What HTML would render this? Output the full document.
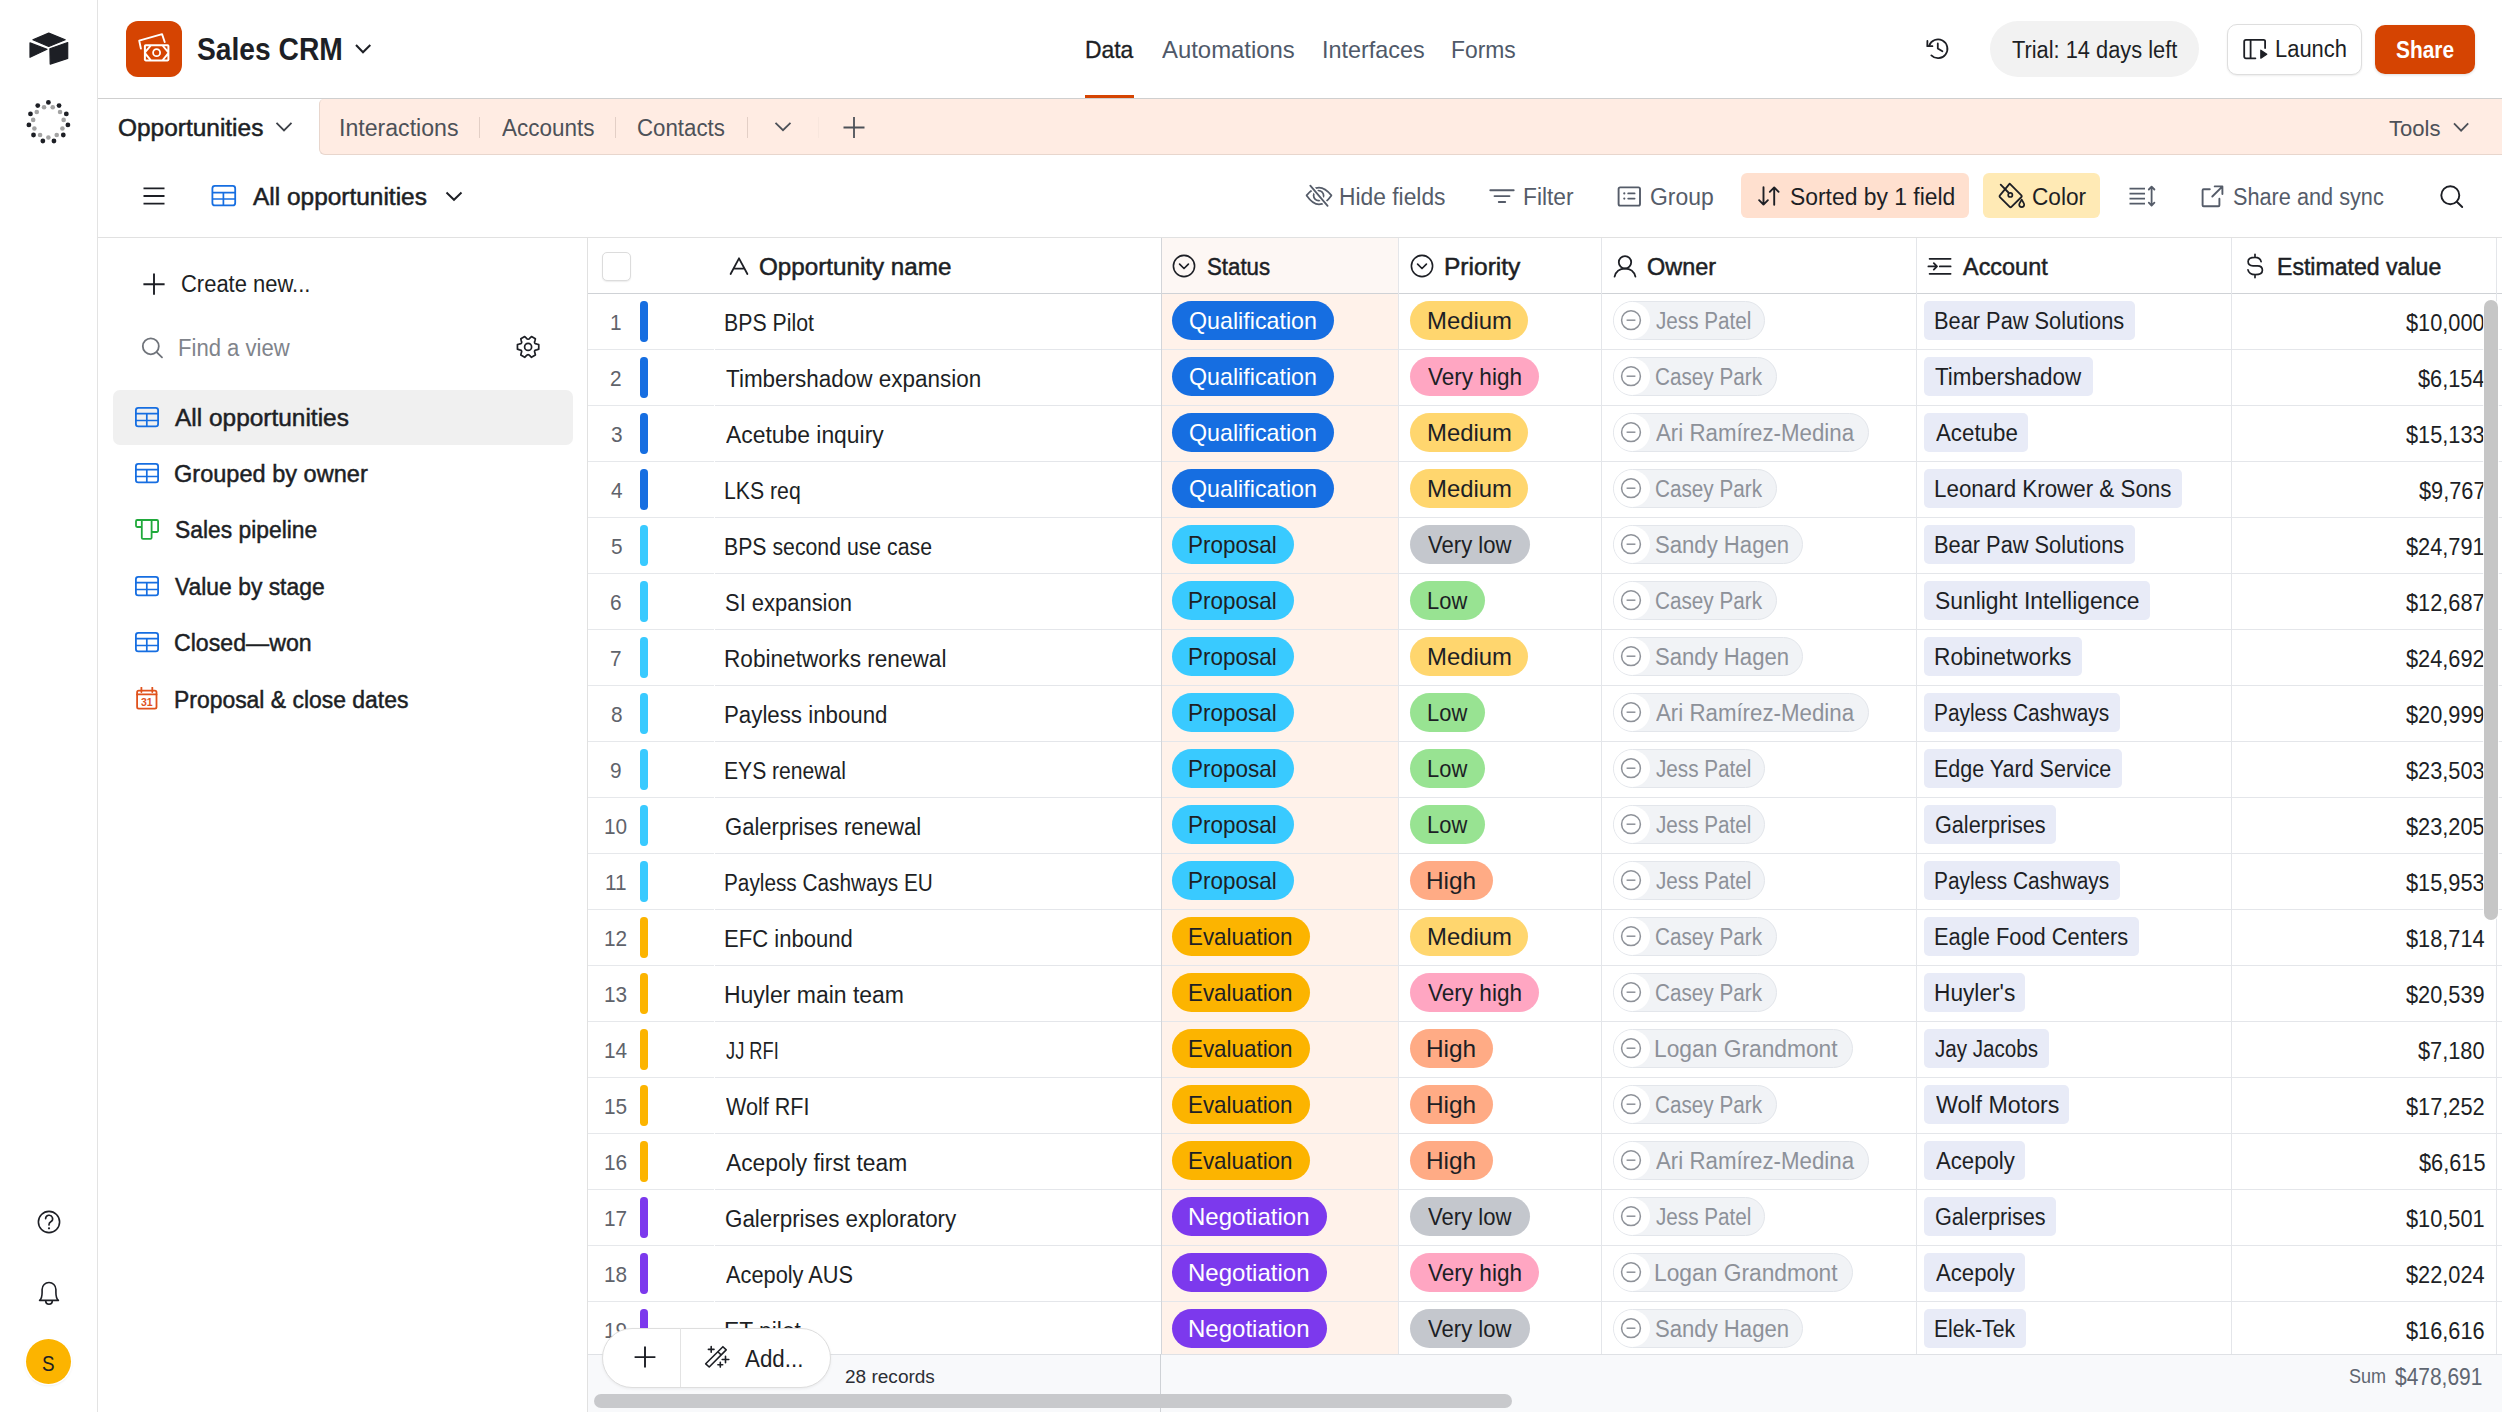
<!DOCTYPE html><html><head><meta charset="utf-8"><style>
html,body{margin:0;padding:0;}
body{width:2502px;height:1412px;position:relative;overflow:hidden;background:#fff;font-family:"Liberation Sans", sans-serif;}
.a{position:absolute;}
.t{position:absolute;white-space:nowrap;transform-origin:0 0;}
</style></head><body>
<div class="a" style="left:97px;top:0px;width:1px;height:1412px;background:#e3e3e3;"></div>
<svg class="a" style="left:0px;top:0px;" width="97" height="160" viewBox="0 0 97 160" fill="none">
<path d="M32.9 39.7 L48.75 33.1 L65.2 39.7 L48.75 46.5 Z" fill="#1d1f25" stroke="#1d1f25" stroke-width="1.2" stroke-linejoin="round"/>
<path d="M30 42.9 L47 49.3 L30 57.3 Z" fill="#1d1f25" stroke="#1d1f25" stroke-width="1.2" stroke-linejoin="round"/>
<path d="M49.9 48.8 L67.7 42.5 L67.7 58.4 L50.2 64.1 Z" fill="#1d1f25" stroke="#1d1f25" stroke-width="1.2" stroke-linejoin="round"/>
</svg>
<svg class="a" style="left:0px;top:0px;" width="97" height="160" viewBox="0 0 97 160" fill="none"><circle cx="48.40" cy="102.40" r="2.4" fill="#1d1f25"/><circle cx="52.74" cy="107.32" r="2.3" fill="#a3a3a3"/><circle cx="59.05" cy="105.53" r="2.4" fill="#1d1f25"/><circle cx="60.04" cy="112.02" r="2.3" fill="#a3a3a3"/><circle cx="66.32" cy="113.92" r="2.4" fill="#1d1f25"/><circle cx="63.64" cy="119.91" r="2.3" fill="#a3a3a3"/><circle cx="67.90" cy="124.90" r="2.4" fill="#1d1f25"/><circle cx="62.41" cy="128.50" r="2.3" fill="#a3a3a3"/><circle cx="63.29" cy="135.00" r="2.4" fill="#1d1f25"/><circle cx="56.73" cy="135.06" r="2.3" fill="#a3a3a3"/><circle cx="53.95" cy="141.00" r="2.4" fill="#1d1f25"/><circle cx="48.40" cy="137.50" r="2.3" fill="#a3a3a3"/><circle cx="42.85" cy="141.00" r="2.4" fill="#1d1f25"/><circle cx="40.07" cy="135.06" r="2.3" fill="#a3a3a3"/><circle cx="33.51" cy="135.00" r="2.4" fill="#1d1f25"/><circle cx="34.39" cy="128.50" r="2.3" fill="#a3a3a3"/><circle cx="28.90" cy="124.90" r="2.4" fill="#1d1f25"/><circle cx="33.16" cy="119.91" r="2.3" fill="#a3a3a3"/><circle cx="30.48" cy="113.92" r="2.4" fill="#1d1f25"/><circle cx="36.76" cy="112.02" r="2.3" fill="#a3a3a3"/><circle cx="37.75" cy="105.53" r="2.4" fill="#1d1f25"/><circle cx="44.06" cy="107.32" r="2.3" fill="#a3a3a3"/></svg>
<svg class="a" style="left:0px;top:1190px;" width="97" height="130" viewBox="0 0 97 130" fill="none">
<circle cx="49" cy="32" r="10.6" stroke="#1d1f25" stroke-width="1.6"/>
<path d="M45.6 28.8 a3.5 3.5 0 1 1 5.2 3 c-1.2 .7 -1.8 1.3 -1.8 2.7 v.6" stroke="#1d1f25" stroke-width="1.6" stroke-linecap="round"/>
<circle cx="49" cy="38.3" r="1.1" fill="#1d1f25"/>
<path d="M39.6 110.4 c2 -1.8 2.5 -3.5 2.5 -8 v-3 a6.9 6.9 0 0 1 13.8 0 v3 c0 4.5 .5 6.2 2.5 8 z" stroke="#1d1f25" stroke-width="1.6" stroke-linejoin="round"/>
<path d="M45.7 110.9 a3.3 3.3 0 0 0 6.6 0" stroke="#1d1f25" stroke-width="1.6"/>
</svg>
<div class="a" style="left:26px;top:1338.5px;width:45px;height:45px;border-radius:50%;background:#fcb400;box-shadow:0 0 0 1.5px #fff,0 1px 3px rgba(0,0,0,.18);"></div>
<div class="t" style="left:42.41px;top:1353.50px;font-size:21.45px;line-height:21.45px;font-weight:400;color:#1d1f25;transform:scaleX(0.8800);">S</div>
<div class="a" style="left:98px;top:98px;width:2404px;height:1px;background:#cfcfcf;"></div>
<div class="a" style="left:126px;top:21px;width:56px;height:56px;border-radius:12px;background:#d54402;"></div>
<svg class="a" style="left:126px;top:21px;" width="56" height="56" viewBox="0 0 56 56" fill="none">
<path d="M14.9 27.6 L13.2 19.6 L36.1 13.2 L38.7 21" stroke="#fff" stroke-width="1.9" stroke-linejoin="round" stroke-linecap="round"/>
<rect x="17.9" y="23.2" width="25.5" height="17.2" rx="1.8" fill="#fff"/>
<path d="M19.9 31.8 L25.4 25.2 H36 L41.4 31.8 L36 38.4 H25.4 Z" fill="#d54402"/>
<path d="M19.9 25.2 L23 25.2 L19.9 28.7 Z M41.4 25.2 L38.3 25.2 L41.4 28.7 Z M19.9 38.4 L23 38.4 L19.9 34.9 Z M41.4 38.4 L38.3 38.4 L41.4 34.9 Z" fill="#d54402"/>
<circle cx="30.6" cy="31.7" r="3.5" stroke="#fff" stroke-width="1.8"/>
</svg>
<div class="t" style="left:196.56px;top:33.91px;font-size:31.30px;line-height:31.30px;font-weight:700;color:#1d1f25;transform:scaleX(0.9018);">Sales CRM</div>
<svg class="a" style="left:350px;top:38px;" width="26" height="22" viewBox="0 0 26 22" fill="none"><path d="M6 7 L13 14.3 L20.3 7" stroke="#1d1f25" stroke-width="2"/></svg>
<div class="t" style="left:1084.71px;top:38.90px;font-size:23.19px;line-height:23.19px;font-weight:400;color:#1d1f25;transform:scaleX(0.9870);-webkit-text-stroke:0.35px #1d1f25;">Data</div>
<div class="t" style="left:1162.00px;top:38.90px;font-size:23.19px;line-height:23.19px;font-weight:400;color:#4f5969;transform:scaleX(1.0299);">Automations</div>
<div class="t" style="left:1321.57px;top:38.90px;font-size:23.19px;line-height:23.19px;font-weight:400;color:#4f5969;transform:scaleX(1.0092);">Interfaces</div>
<div class="t" style="left:1451.11px;top:38.90px;font-size:23.19px;line-height:23.19px;font-weight:400;color:#4f5969;transform:scaleX(0.9864);">Forms</div>
<div class="a" style="left:1085px;top:95px;width:49px;height:3px;background:#d54402;"></div>
<svg class="a" style="left:1915px;top:25px;" width="50" height="50" viewBox="0 0 50 50" fill="none">
<path d="M16.35 30.45 A9.4 9.4 0 1 0 14.17 20.6" stroke="#1d1f25" stroke-width="1.8" stroke-linecap="round"/>
<path d="M12.4 15.9 L12.3 21.2 L17.4 21.2" stroke="#1d1f25" stroke-width="1.8" stroke-linecap="round" stroke-linejoin="round"/>
<path d="M22.8 18.4 V23.4 L27.4 26.2" stroke="#1d1f25" stroke-width="1.8" stroke-linecap="round" stroke-linejoin="round"/>
</svg>
<div class="a" style="left:1990px;top:21px;width:209px;height:56px;border-radius:28px;background:#f2f2f2;"></div>
<div class="t" style="left:2011.86px;top:39.10px;font-size:23.62px;line-height:23.62px;font-weight:400;color:#1d1f25;transform:scaleX(0.9239);">Trial: 14 days left</div>
<div class="a" style="left:2226.5px;top:24px;width:135px;height:50.5px;box-sizing:border-box;border-radius:10px;border:1px solid #dedede;background:#fff;box-shadow:0 1px 2px rgba(0,0,0,.08);"></div>
<svg class="a" style="left:2235px;top:30px;" width="40" height="40" viewBox="0 0 40 40" fill="none">
<path d="M20.4 28.3 H11 a1.8 1.8 0 0 1 -1.8 -1.8 V11.6 a1.8 1.8 0 0 1 1.8 -1.8 H28.6 a1.5 1.5 0 0 1 1.5 1.5 V18" stroke="#1d1f25" stroke-width="1.8" stroke-linecap="round"/>
<path d="M15.6 10 V28" stroke="#1d1f25" stroke-width="1.8"/>
<path d="M25.8 20.2 L31.8 24.2 L25.8 28.2 Z" fill="#1d1f25" stroke="#1d1f25" stroke-width="1.2" stroke-linejoin="round"/>
</svg>
<div class="t" style="left:2275.29px;top:38.10px;font-size:23.62px;line-height:23.62px;font-weight:400;color:#1d1f25;transform:scaleX(0.9283);">Launch</div>
<div class="a" style="left:2375px;top:25px;width:100px;height:49px;border-radius:10px;background:#d54402;box-shadow:0 1px 3px rgba(0,0,0,.14);"></div>
<div class="t" style="left:2396.47px;top:38.91px;font-size:23.48px;line-height:23.48px;font-weight:700;color:#fff;transform:scaleX(0.8896);">Share</div>
<div class="a" style="left:319px;top:99px;width:2200px;height:56px;box-sizing:border-box;background:#ffece3;border-left:1px solid #e8d6cd;border-bottom:1px solid #e8d6cd;border-radius:5px 0 0 6px;"></div>
<div class="t" style="left:118.35px;top:117.21px;font-size:23.48px;line-height:23.48px;font-weight:400;color:#1d1f25;transform:scaleX(1.0413);-webkit-text-stroke:0.5px #1d1f25;">Opportunities</div>
<svg class="a" style="left:270px;top:115px;" width="28" height="22" viewBox="0 0 28 22" fill="none"><path d="M6.5 7.8 L14 15.5 L21.5 7.8" stroke="#3d4148" stroke-width="1.8"/></svg>
<div class="t" style="left:338.69px;top:116.21px;font-size:23.91px;line-height:23.91px;font-weight:400;color:#4d5158;transform:scaleX(0.9669);">Interactions</div>
<div class="a" style="left:479px;top:117px;width:1px;height:21px;background:#e3cfc6;"></div>
<div class="t" style="left:501.70px;top:116.21px;font-size:23.91px;line-height:23.91px;font-weight:400;color:#4d5158;transform:scaleX(0.9404);">Accounts</div>
<div class="a" style="left:615px;top:117px;width:1px;height:21px;background:#e3cfc6;"></div>
<div class="t" style="left:636.76px;top:116.21px;font-size:23.91px;line-height:23.91px;font-weight:400;color:#4d5158;transform:scaleX(0.9319);">Contacts</div>
<div class="a" style="left:746.5px;top:117px;width:1px;height:21px;background:#e3cfc6;"></div>
<svg class="a" style="left:770px;top:115px;" width="28" height="22" viewBox="0 0 28 22" fill="none"><path d="M5.5 7.8 L13 15.2 L20.5 7.8" stroke="#4d5158" stroke-width="1.8"/></svg>
<div class="a" style="left:817.5px;top:117px;width:1px;height:21px;background:#f8e6dd;"></div>
<svg class="a" style="left:838px;top:112px;" width="32" height="32" viewBox="0 0 32 32" fill="none"><path d="M16 5 V26 M5.5 15.5 H26.5" stroke="#4d5158" stroke-width="1.8"/></svg>
<div class="t" style="left:2388.66px;top:116.61px;font-size:22.90px;line-height:22.90px;font-weight:400;color:#4d5158;transform:scaleX(0.9641);">Tools</div>
<svg class="a" style="left:2448px;top:113px;" width="28" height="26" viewBox="0 0 28 26" fill="none"><path d="M6 10.3 L13.1 17.6 L20.2 10.3" stroke="#4d5158" stroke-width="1.8"/></svg>
<div class="a" style="left:98px;top:237px;width:2404px;height:1px;background:#e1e1e1;"></div>
<svg class="a" style="left:135px;top:175px;" width="40" height="40" viewBox="0 0 40 40" fill="none"><path d="M8.5 13.4 H29.5 M8.5 21 H29.5 M8.5 28.6 H29.5" stroke="#1d1f25" stroke-width="1.8"/></svg>
<svg class="a" style="left:205px;top:178px;" width="40" height="36" viewBox="0 0 40 36" fill="none">
<rect x="7.4" y="7.9" width="22.8" height="19.5" rx="2.5" stroke="#166ee1" stroke-width="1.8"/>
<path d="M7.4 14.6 H30.2 M7.4 21 H30.2 M18.4 14.6 V27.4" stroke="#166ee1" stroke-width="1.7"/>
</svg>
<div class="t" style="left:252.50px;top:186.01px;font-size:23.62px;line-height:23.62px;font-weight:400;color:#1d1f25;transform:scaleX(1.0350);-webkit-text-stroke:0.5px #1d1f25;">All opportunities</div>
<svg class="a" style="left:440px;top:185px;" width="28" height="22" viewBox="0 0 28 22" fill="none"><path d="M6.5 7.5 L14 14.8 L21.5 7.5" stroke="#1d1f25" stroke-width="1.9"/></svg>
<svg class="a" style="left:1295px;top:175px;" width="50" height="40" viewBox="0 0 50 40" fill="none"><path d="M11.6 20.4 Q24 4.6 36.4 20.4 Q24 38.2 11.6 20.4 Z" stroke="#555c69" stroke-width="1.75" stroke-linejoin="round"/>
<circle cx="23.6" cy="20.6" r="5" stroke="#555c69" stroke-width="1.75"/>
<path d="M15.3 10.6 L32.6 30.8" stroke="#fff" stroke-width="4.6"/>
<path d="M15.3 10.6 L32.6 30.8" stroke="#555c69" stroke-width="1.8" stroke-linecap="round"/></svg>
<div class="t" style="left:1339.22px;top:185.02px;font-size:23.91px;line-height:23.91px;font-weight:400;color:#555c69;transform:scaleX(0.9538);">Hide fields</div>
<svg class="a" style="left:1485px;top:180px;" width="34" height="32" viewBox="0 0 34 32" fill="none"><path d="M5.3 10.3 H28.7 M9.5 16.1 H24.5 M13.8 22 H20.2" stroke="#555c69" stroke-width="1.9" stroke-linecap="round"/></svg>
<div class="t" style="left:1522.52px;top:185.02px;font-size:23.91px;line-height:23.91px;font-weight:400;color:#555c69;transform:scaleX(0.9520);">Filter</div>
<svg class="a" style="left:1612px;top:180px;" width="34" height="32" viewBox="0 0 34 32" fill="none">
<rect x="6.6" y="7.4" width="21.4" height="18.2" rx="1.6" stroke="#555c69" stroke-width="1.9"/>
<circle cx="12.3" cy="13.4" r="1.1" fill="#555c69"/><circle cx="12.3" cy="18.6" r="1.1" fill="#555c69"/>
<path d="M16.2 13.4 H22.6 M16.2 18.6 H22.6" stroke="#555c69" stroke-width="1.8" stroke-linecap="round"/>
</svg>
<div class="t" style="left:1649.73px;top:185.02px;font-size:23.91px;line-height:23.91px;font-weight:400;color:#555c69;transform:scaleX(0.9585);">Group</div>
<div class="a" style="left:1741px;top:173px;width:227.5px;height:45px;border-radius:6px;background:#ffe0cf;"></div>
<svg class="a" style="left:1752px;top:180px;" width="34" height="34" viewBox="0 0 34 34" fill="none">
<path d="M11.5 7.2 V24.6 M7.1 20.2 L11.5 24.6 L15.9 20.2" stroke="#1d1f25" stroke-width="1.9" stroke-linecap="round" stroke-linejoin="round"/>
<path d="M22.2 24.8 V7.4 M17.8 11.8 L22.2 7.4 L26.6 11.8" stroke="#1d1f25" stroke-width="1.9" stroke-linecap="round" stroke-linejoin="round"/>
</svg>
<div class="t" style="left:1790.28px;top:185.02px;font-size:23.91px;line-height:23.91px;font-weight:400;color:#1d1f25;transform:scaleX(0.9571);">Sorted by 1 field</div>
<div class="a" style="left:1983px;top:173px;width:117px;height:45px;border-radius:6px;background:#ffeab5;"></div>
<svg class="a" style="left:1990px;top:175px;" width="40" height="40" viewBox="0 0 40 40" fill="none">
<path d="M19.7 8.6 L31.4 20.3 a1.2 1.2 0 0 1 0 1.7 L21.4 31.9 a1.2 1.2 0 0 1 -1.7 0 L9.9 22.1 a1.2 1.2 0 0 1 0 -1.7 Z" stroke="#1d1f25" stroke-width="1.8" stroke-linejoin="round"/>
<path d="M10.7 9.6 L18.4 17.5" stroke="#1d1f25" stroke-width="1.8" stroke-linecap="round"/>
<circle cx="20.3" cy="19.9" r="2.1" stroke="#1d1f25" stroke-width="1.7"/>
<path d="M31.7 24.5 C31.2 26.2 29.2 28 29.2 29.6 a2.5 2.5 0 0 0 5 0 C34.2 28 32.2 26.2 31.7 24.5 Z" stroke="#1d1f25" stroke-width="1.7" stroke-linejoin="round"/>
</svg>
<div class="t" style="left:2031.94px;top:185.02px;font-size:23.91px;line-height:23.91px;font-weight:400;color:#1d1f25;transform:scaleX(0.9480);">Color</div>
<svg class="a" style="left:2122px;top:178px;" width="40" height="36" viewBox="0 0 40 36" fill="none">
<path d="M7.5 10.6 H23 M7.5 15.6 H23 M7.5 20.6 H23 M7.5 25.6 H23" stroke="#555c69" stroke-width="1.9"/>
<path d="M29.6 8.8 V27.4 M26.8 11.5 L29.6 8.6 L32.4 11.5 M26.8 24.7 L29.6 27.6 L32.4 24.7" stroke="#555c69" stroke-width="1.8" stroke-linecap="round" stroke-linejoin="round"/>
</svg>
<svg class="a" style="left:2195px;top:178px;" width="36" height="36" viewBox="0 0 36 36" fill="none">
<path d="M14.8 11.3 H8.6 a1 1 0 0 0 -1 1 V27.2 a1 1 0 0 0 1 1 H23.4 a1 1 0 0 0 1 -1 V20.8" stroke="#555c69" stroke-width="1.9" stroke-linecap="round"/>
<path d="M19.7 8.4 H27.4 V16.1 M27.2 8.6 L17.3 18.5" stroke="#555c69" stroke-width="1.9" stroke-linecap="round" stroke-linejoin="round"/>
</svg>
<div class="t" style="left:2233.32px;top:185.02px;font-size:23.91px;line-height:23.91px;font-weight:400;color:#555c69;transform:scaleX(0.9076);">Share and sync</div>
<svg class="a" style="left:2432px;top:178px;" width="40" height="36" viewBox="0 0 40 36" fill="none"><circle cx="18.3" cy="17.2" r="9" stroke="#1d1f25" stroke-width="1.9"/><path d="M24.8 23.7 L30.2 29" stroke="#1d1f25" stroke-width="1.9" stroke-linecap="round"/></svg>
<div class="a" style="left:587px;top:238px;width:1px;height:1174px;background:#e1e1e1;"></div>
<svg class="a" style="left:138px;top:268px;" width="32" height="32" viewBox="0 0 32 32" fill="none"><path d="M16 5.6 V26.8 M5.4 16.2 H26.6" stroke="#1d1f25" stroke-width="1.9"/></svg>
<div class="t" style="left:181.47px;top:272.01px;font-size:24.35px;line-height:24.35px;font-weight:400;color:#1d1f25;transform:scaleX(0.9021);">Create new...</div>
<svg class="a" style="left:136px;top:331px;" width="32" height="32" viewBox="0 0 32 32" fill="none"><circle cx="14.8" cy="15.3" r="8" stroke="#6f737a" stroke-width="1.8"/><path d="M20.6 21.1 L26 26.3" stroke="#6f737a" stroke-width="1.8" stroke-linecap="round"/></svg>
<div class="t" style="left:177.97px;top:336.01px;font-size:24.35px;line-height:24.35px;font-weight:400;color:#80848b;transform:scaleX(0.9075);">Find a view</div>
<svg class="a" style="left:510px;top:330px;" width="36" height="34" viewBox="0 0 36 34" fill="none"><path d="M28.76 14.63 L28.76 19.17 L26.61 19.83 C24.82 19.75 23.93 21.29 24.89 22.80 L25.39 25.00 L21.47 27.27 L19.82 25.73 C18.99 24.15 17.21 24.15 16.38 25.73 L14.73 27.27 L10.81 25.00 L11.31 22.80 C12.27 21.29 11.38 19.75 9.59 19.83 L7.44 19.17 L7.44 14.63 L9.59 13.97 C11.38 14.05 12.27 12.51 11.31 11.00 L10.81 8.80 L14.73 6.53 L16.38 8.07 C17.21 9.65 18.99 9.65 19.82 8.07 L21.47 6.53 L25.39 8.80 L24.89 11.00 C23.93 12.51 24.82 14.05 26.61 13.97 Z" stroke="#1d1f25" stroke-width="1.7" stroke-linejoin="round"/><circle cx="18.1" cy="16.9" r="3.5" stroke="#1d1f25" stroke-width="1.7"/></svg>
<div class="a" style="left:112.5px;top:389.5px;width:460px;height:55.5px;border-radius:7px;background:#f0f0f0;"></div>
<svg class="a" style="left:133px;top:404.8px;" width="30" height="26" viewBox="0 0 30 26" fill="none"><rect x="2.9" y="2.8" width="22.2" height="18.5" rx="2.4" stroke="#166ee1" stroke-width="1.8"/>
<path d="M2.9 8.6 H25.1 M2.9 15.5 H25.1 M13.8 8.6 V21.3" stroke="#166ee1" stroke-width="1.7"/></svg>
<div class="t" style="left:175.40px;top:405.80px;font-size:24.64px;line-height:24.64px;font-weight:400;color:#1d1f25;transform:scaleX(0.9924);-webkit-text-stroke:0.5px #1d1f25;">All opportunities</div>
<svg class="a" style="left:133px;top:461.2px;" width="30" height="26" viewBox="0 0 30 26" fill="none"><rect x="2.9" y="2.8" width="22.2" height="18.5" rx="2.4" stroke="#166ee1" stroke-width="1.8"/>
<path d="M2.9 8.6 H25.1 M2.9 15.5 H25.1 M13.8 8.6 V21.3" stroke="#166ee1" stroke-width="1.7"/></svg>
<div class="t" style="left:174.30px;top:462.21px;font-size:24.64px;line-height:24.64px;font-weight:400;color:#1d1f25;transform:scaleX(0.9562);-webkit-text-stroke:0.5px #1d1f25;">Grouped by owner</div>
<svg class="a" style="left:133px;top:517.4px;" width="30" height="26" viewBox="0 0 30 26" fill="none"><path d="M4.2 3 H23.9 a1.2 1.2 0 0 1 1.2 1.2 V13.8 a1.2 1.2 0 0 1 -1.2 1.2 H18.6 M4.2 3 a1.2 1.2 0 0 0 -1.2 1.2 V8.8 a1.2 1.2 0 0 0 1.2 1.2 H8.8 M8.8 3 V20.7 a1.2 1.2 0 0 0 1.2 1.2 H17.4 a1.2 1.2 0 0 0 1.2 -1.2 V3" stroke="#20a93b" stroke-width="1.8" stroke-linejoin="round"/></svg>
<div class="t" style="left:174.69px;top:518.40px;font-size:24.64px;line-height:24.64px;font-weight:400;color:#1d1f25;transform:scaleX(0.9272);-webkit-text-stroke:0.5px #1d1f25;">Sales pipeline</div>
<svg class="a" style="left:133px;top:573.6px;" width="30" height="26" viewBox="0 0 30 26" fill="none"><rect x="2.9" y="2.8" width="22.2" height="18.5" rx="2.4" stroke="#166ee1" stroke-width="1.8"/>
<path d="M2.9 8.6 H25.1 M2.9 15.5 H25.1 M13.8 8.6 V21.3" stroke="#166ee1" stroke-width="1.7"/></svg>
<div class="t" style="left:175.40px;top:574.60px;font-size:24.64px;line-height:24.64px;font-weight:400;color:#1d1f25;transform:scaleX(0.9290);-webkit-text-stroke:0.5px #1d1f25;">Value by stage</div>
<svg class="a" style="left:133px;top:629.8px;" width="30" height="26" viewBox="0 0 30 26" fill="none"><rect x="2.9" y="2.8" width="22.2" height="18.5" rx="2.4" stroke="#166ee1" stroke-width="1.8"/>
<path d="M2.9 8.6 H25.1 M2.9 15.5 H25.1 M13.8 8.6 V21.3" stroke="#166ee1" stroke-width="1.7"/></svg>
<div class="t" style="left:174.31px;top:630.80px;font-size:24.64px;line-height:24.64px;font-weight:400;color:#1d1f25;transform:scaleX(0.9397);-webkit-text-stroke:0.5px #1d1f25;">Closed—won</div>
<svg class="a" style="left:133px;top:686.5px;" width="30" height="28" viewBox="0 0 30 28" fill="none"><rect x="4.1" y="3.7" width="19.4" height="17.9" rx="1.6" stroke="#e0521c" stroke-width="1.8"/>
<path d="M4.1 7.4 H23.5 M8.4 0.6 V5 M19.3 0.6 V5" stroke="#e0521c" stroke-width="1.8" stroke-linecap="round"/>
<text x="13.8" y="19.2" font-family="Liberation Sans" font-weight="700" font-size="10.5" fill="#e0521c" text-anchor="middle">31</text></svg>
<div class="t" style="left:173.61px;top:687.51px;font-size:24.64px;line-height:24.64px;font-weight:400;color:#1d1f25;transform:scaleX(0.9306);-webkit-text-stroke:0.5px #1d1f25;">Proposal &amp; close dates</div>
<div class="a" style="left:1162px;top:238px;width:236px;height:55px;background:#fdf7f4;"></div>
<div class="a" style="left:1162px;top:294px;width:236px;height:1060px;background:#fff2ea;"></div>
<div class="a" style="left:588px;top:293px;width:1914px;height:1px;background:#cfd2d6;"></div>
<div class="a" style="left:588px;top:349px;width:126px;height:1px;background:#e6e8eb;"></div>
<div class="a" style="left:715px;top:349px;width:1787px;height:1px;background:#e4e6ea;"></div>
<div class="a" style="left:588px;top:405px;width:126px;height:1px;background:#e6e8eb;"></div>
<div class="a" style="left:715px;top:405px;width:1787px;height:1px;background:#e4e6ea;"></div>
<div class="a" style="left:588px;top:461px;width:126px;height:1px;background:#e6e8eb;"></div>
<div class="a" style="left:715px;top:461px;width:1787px;height:1px;background:#e4e6ea;"></div>
<div class="a" style="left:588px;top:517px;width:126px;height:1px;background:#e6e8eb;"></div>
<div class="a" style="left:715px;top:517px;width:1787px;height:1px;background:#e4e6ea;"></div>
<div class="a" style="left:588px;top:573px;width:126px;height:1px;background:#e6e8eb;"></div>
<div class="a" style="left:715px;top:573px;width:1787px;height:1px;background:#e4e6ea;"></div>
<div class="a" style="left:588px;top:629px;width:126px;height:1px;background:#e6e8eb;"></div>
<div class="a" style="left:715px;top:629px;width:1787px;height:1px;background:#e4e6ea;"></div>
<div class="a" style="left:588px;top:685px;width:126px;height:1px;background:#e6e8eb;"></div>
<div class="a" style="left:715px;top:685px;width:1787px;height:1px;background:#e4e6ea;"></div>
<div class="a" style="left:588px;top:741px;width:126px;height:1px;background:#e6e8eb;"></div>
<div class="a" style="left:715px;top:741px;width:1787px;height:1px;background:#e4e6ea;"></div>
<div class="a" style="left:588px;top:797px;width:126px;height:1px;background:#e6e8eb;"></div>
<div class="a" style="left:715px;top:797px;width:1787px;height:1px;background:#e4e6ea;"></div>
<div class="a" style="left:588px;top:853px;width:126px;height:1px;background:#e6e8eb;"></div>
<div class="a" style="left:715px;top:853px;width:1787px;height:1px;background:#e4e6ea;"></div>
<div class="a" style="left:588px;top:909px;width:126px;height:1px;background:#e6e8eb;"></div>
<div class="a" style="left:715px;top:909px;width:1787px;height:1px;background:#e4e6ea;"></div>
<div class="a" style="left:588px;top:965px;width:126px;height:1px;background:#e6e8eb;"></div>
<div class="a" style="left:715px;top:965px;width:1787px;height:1px;background:#e4e6ea;"></div>
<div class="a" style="left:588px;top:1021px;width:126px;height:1px;background:#e6e8eb;"></div>
<div class="a" style="left:715px;top:1021px;width:1787px;height:1px;background:#e4e6ea;"></div>
<div class="a" style="left:588px;top:1077px;width:126px;height:1px;background:#e6e8eb;"></div>
<div class="a" style="left:715px;top:1077px;width:1787px;height:1px;background:#e4e6ea;"></div>
<div class="a" style="left:588px;top:1133px;width:126px;height:1px;background:#e6e8eb;"></div>
<div class="a" style="left:715px;top:1133px;width:1787px;height:1px;background:#e4e6ea;"></div>
<div class="a" style="left:588px;top:1189px;width:126px;height:1px;background:#e6e8eb;"></div>
<div class="a" style="left:715px;top:1189px;width:1787px;height:1px;background:#e4e6ea;"></div>
<div class="a" style="left:588px;top:1245px;width:126px;height:1px;background:#e6e8eb;"></div>
<div class="a" style="left:715px;top:1245px;width:1787px;height:1px;background:#e4e6ea;"></div>
<div class="a" style="left:588px;top:1301px;width:126px;height:1px;background:#e6e8eb;"></div>
<div class="a" style="left:715px;top:1301px;width:1787px;height:1px;background:#e4e6ea;"></div>
<div class="a" style="left:1161px;top:238px;width:1px;height:1116px;background:#d3d5d9;"></div>
<div class="a" style="left:1398px;top:238px;width:1px;height:1116px;background:#e4e6ea;"></div>
<div class="a" style="left:1601px;top:238px;width:1px;height:1116px;background:#e4e6ea;"></div>
<div class="a" style="left:1916px;top:238px;width:1px;height:1116px;background:#e4e6ea;"></div>
<div class="a" style="left:2231px;top:238px;width:1px;height:1116px;background:#e4e6ea;"></div>
<div class="a" style="left:2496px;top:238px;width:1px;height:1116px;background:#e4e6ea;"></div>
<div class="a" style="left:601.5px;top:251.5px;width:29px;height:29px;box-sizing:border-box;border-radius:5px;border:1px solid #dcdcdc;background:#fff;box-shadow:0 1px 1.5px rgba(0,0,0,.08);"></div>
<svg class="a" style="left:726px;top:252px;" width="28" height="28" viewBox="0 0 28 28" fill="none"><path d="M4.6 22 L13 6.3 L21.4 22 M7.8 16.6 H18.2" stroke="#1d1f25" stroke-width="1.8" stroke-linejoin="round" stroke-linecap="round"/></svg>
<div class="t" style="left:759.06px;top:256.30px;font-size:23.62px;line-height:23.62px;font-weight:400;color:#1d1f25;transform:scaleX(1.0253);-webkit-text-stroke:0.5px #1d1f25;">Opportunity name</div>
<svg class="a" style="left:1171px;top:252.6px;" width="26" height="26" viewBox="0 0 26 26" fill="none"><circle cx="13" cy="13" r="10.6" stroke="#1d1f25" stroke-width="1.6"/><path d="M8.6 11.2 L13 15.5 L17.4 11.2" stroke="#1d1f25" stroke-width="1.7" stroke-linecap="round" stroke-linejoin="round"/></svg>
<div class="t" style="left:1207.00px;top:256.30px;font-size:23.62px;line-height:23.62px;font-weight:400;color:#1d1f25;transform:scaleX(0.9421);-webkit-text-stroke:0.5px #1d1f25;">Status</div>
<svg class="a" style="left:1409px;top:252.6px;" width="26" height="26" viewBox="0 0 26 26" fill="none"><circle cx="13" cy="13" r="10.6" stroke="#1d1f25" stroke-width="1.6"/><path d="M8.6 11.2 L13 15.5 L17.4 11.2" stroke="#1d1f25" stroke-width="1.7" stroke-linecap="round" stroke-linejoin="round"/></svg>
<div class="t" style="left:1443.58px;top:256.30px;font-size:23.62px;line-height:23.62px;font-weight:400;color:#1d1f25;transform:scaleX(1.0397);-webkit-text-stroke:0.5px #1d1f25;">Priority</div>
<svg class="a" style="left:1610px;top:252px;" width="30" height="28" viewBox="0 0 30 28" fill="none"><circle cx="15" cy="10.3" r="6.2" stroke="#1d1f25" stroke-width="1.8"/><path d="M4.6 24.6 C6 19 10 16.6 15 16.6 C20 16.6 24 19 25.4 24.6" stroke="#1d1f25" stroke-width="1.8" stroke-linecap="round"/></svg>
<div class="t" style="left:1646.90px;top:256.30px;font-size:23.62px;line-height:23.62px;font-weight:400;color:#1d1f25;transform:scaleX(0.9919);-webkit-text-stroke:0.5px #1d1f25;">Owner</div>
<svg class="a" style="left:1925px;top:254px;" width="30" height="24" viewBox="0 0 30 24" fill="none"><path d="M4.6 4.8 H25.6 M14.8 12.4 H25.6 M4.6 19.8 H25.6" stroke="#1d1f25" stroke-width="1.8" stroke-linecap="round"/>
<path d="M3.4 12.4 H11.8 M8.8 9.2 L12 12.4 L8.8 15.6" stroke="#1d1f25" stroke-width="1.8" stroke-linecap="round" stroke-linejoin="round"/></svg>
<div class="t" style="left:1963.20px;top:256.30px;font-size:23.62px;line-height:23.62px;font-weight:400;color:#1d1f25;transform:scaleX(0.9925);-webkit-text-stroke:0.5px #1d1f25;">Account</div>
<svg class="a" style="left:2238px;top:248px;" width="34" height="34" viewBox="0 0 34 34" fill="none"><path d="M23.1 13.6 C22.5 10.8 20.3 9.4 17 9.4 C12.7 9.4 10.1 11 10.1 13.6 C10.1 16.2 12.2 17.8 15 17.8 H19.5 C22.4 17.8 24.4 19.6 24.4 22.2 C24.4 25 21.6 26.6 17.3 26.6 C13 26.6 10.6 24.8 10 21.8 M17 6.3 V9.4 M17 26.6 V29.6" stroke="#1d1f25" stroke-width="1.7" stroke-linecap="round"/></svg>
<div class="t" style="left:2276.90px;top:256.30px;font-size:23.62px;line-height:23.62px;font-weight:400;color:#1d1f25;transform:scaleX(0.9778);-webkit-text-stroke:0.5px #1d1f25;">Estimated value</div>
<div class="t" style="left:610.19px;top:312.81px;font-size:21.45px;line-height:21.45px;font-weight:400;color:#5f636b;transform:scaleX(0.9700);">1</div>
<div class="a" style="left:640.3px;top:301px;width:7.4px;height:41px;border-radius:3.7px;background:#166ee1;"></div>
<div class="t" style="left:724.34px;top:311.11px;font-size:23.77px;line-height:23.77px;font-weight:400;color:#1d1f25;transform:scaleX(0.8953);">BPS Pilot</div>
<div class="a" style="left:1172px;top:301px;width:162.0px;height:39px;border-radius:19.5px;background:#166ee1;"></div>
<div class="t" style="left:1188.91px;top:309.90px;font-size:23.19px;line-height:23.19px;font-weight:400;color:#fff;transform:scaleX(1.0023);">Qualification</div>
<div class="a" style="left:1410.3px;top:301px;width:117.5px;height:39px;border-radius:19.5px;background:#ffd66e;"></div>
<div class="t" style="left:1426.54px;top:309.90px;font-size:23.19px;line-height:23.19px;font-weight:400;color:#1d1f25;transform:scaleX(1.0294);">Medium</div>
<div class="a" style="left:1613px;top:301px;width:151.8px;height:38.5px;box-sizing:border-box;border-radius:19.5px;background:#f1f3f6;border:1px solid #e3e6eb;"></div>
<div class="a" style="left:1613.5px;top:302px;width:36px;height:36.5px;border-radius:50%;background:#fff;"></div>
<svg class="a" style="left:1619px;top:308px;" width="24" height="24" viewBox="0 0 24 24" fill="none"><circle cx="12" cy="12.2" r="9.4" stroke="#8e9299" stroke-width="1.5"/><path d="M7.6 12.2 H16.4" stroke="#8e9299" stroke-width="1.5"/></svg>
<div class="t" style="left:1655.68px;top:310.10px;font-size:23.62px;line-height:23.62px;font-weight:400;color:#8d9199;transform:scaleX(0.8762);">Jess Patel</div>
<div class="a" style="left:1924.4px;top:301px;width:210.2px;height:38.5px;border-radius:5px;background:#e8ebf7;"></div>
<div class="t" style="left:1934.00px;top:310.12px;font-size:23.48px;line-height:23.48px;font-weight:400;color:#1d1f25;transform:scaleX(0.9287);">Bear Paw Solutions</div>
<div class="t" style="left:2406.13px;top:311.81px;font-size:23.04px;line-height:23.04px;font-weight:400;color:#1d1f25;transform:scaleX(0.9450);">$10,000</div>
<div class="t" style="left:610.35px;top:368.81px;font-size:21.45px;line-height:21.45px;font-weight:400;color:#5f636b;transform:scaleX(0.9700);">2</div>
<div class="a" style="left:640.3px;top:357px;width:7.4px;height:41px;border-radius:3.7px;background:#166ee1;"></div>
<div class="t" style="left:725.65px;top:367.11px;font-size:23.77px;line-height:23.77px;font-weight:400;color:#1d1f25;transform:scaleX(0.9454);">Timbershadow expansion</div>
<div class="a" style="left:1172px;top:357px;width:162.0px;height:39px;border-radius:19.5px;background:#166ee1;"></div>
<div class="t" style="left:1188.91px;top:365.90px;font-size:23.19px;line-height:23.19px;font-weight:400;color:#fff;transform:scaleX(1.0023);">Qualification</div>
<div class="a" style="left:1410.3px;top:357px;width:128.4px;height:39px;border-radius:19.5px;background:#ffa6c2;"></div>
<div class="t" style="left:1428.40px;top:365.90px;font-size:23.19px;line-height:23.19px;font-weight:400;color:#1d1f25;transform:scaleX(0.9719);">Very high</div>
<div class="a" style="left:1613px;top:357px;width:164.4px;height:38.5px;box-sizing:border-box;border-radius:19.5px;background:#f1f3f6;border:1px solid #e3e6eb;"></div>
<div class="a" style="left:1613.5px;top:358px;width:36px;height:36.5px;border-radius:50%;background:#fff;"></div>
<svg class="a" style="left:1619px;top:364px;" width="24" height="24" viewBox="0 0 24 24" fill="none"><circle cx="12" cy="12.2" r="9.4" stroke="#8e9299" stroke-width="1.5"/><path d="M7.6 12.2 H16.4" stroke="#8e9299" stroke-width="1.5"/></svg>
<div class="t" style="left:1655.03px;top:366.10px;font-size:23.62px;line-height:23.62px;font-weight:400;color:#8d9199;transform:scaleX(0.8768);">Casey Park</div>
<div class="a" style="left:1924.4px;top:357px;width:168.4px;height:38.5px;border-radius:5px;background:#e8ebf7;"></div>
<div class="t" style="left:1935.35px;top:366.12px;font-size:23.48px;line-height:23.48px;font-weight:400;color:#1d1f25;transform:scaleX(0.9548);">Timbershadow</div>
<div class="t" style="left:2418.24px;top:367.81px;font-size:23.04px;line-height:23.04px;font-weight:400;color:#1d1f25;transform:scaleX(0.9450);">$6,154</div>
<div class="t" style="left:610.51px;top:424.81px;font-size:21.45px;line-height:21.45px;font-weight:400;color:#5f636b;transform:scaleX(0.9700);">3</div>
<div class="a" style="left:640.3px;top:413px;width:7.4px;height:41px;border-radius:3.7px;background:#166ee1;"></div>
<div class="t" style="left:726.00px;top:423.11px;font-size:23.77px;line-height:23.77px;font-weight:400;color:#1d1f25;transform:scaleX(0.9626);">Acetube inquiry</div>
<div class="a" style="left:1172px;top:413px;width:162.0px;height:39px;border-radius:19.5px;background:#166ee1;"></div>
<div class="t" style="left:1188.91px;top:421.90px;font-size:23.19px;line-height:23.19px;font-weight:400;color:#fff;transform:scaleX(1.0023);">Qualification</div>
<div class="a" style="left:1410.3px;top:413px;width:117.5px;height:39px;border-radius:19.5px;background:#ffd66e;"></div>
<div class="t" style="left:1426.54px;top:421.90px;font-size:23.19px;line-height:23.19px;font-weight:400;color:#1d1f25;transform:scaleX(1.0294);">Medium</div>
<div class="a" style="left:1613px;top:413px;width:256.3px;height:38.5px;box-sizing:border-box;border-radius:19.5px;background:#f1f3f6;border:1px solid #e3e6eb;"></div>
<div class="a" style="left:1613.5px;top:414px;width:36px;height:36.5px;border-radius:50%;background:#fff;"></div>
<svg class="a" style="left:1619px;top:420px;" width="24" height="24" viewBox="0 0 24 24" fill="none"><circle cx="12" cy="12.2" r="9.4" stroke="#8e9299" stroke-width="1.5"/><path d="M7.6 12.2 H16.4" stroke="#8e9299" stroke-width="1.5"/></svg>
<div class="t" style="left:1656.00px;top:422.10px;font-size:23.62px;line-height:23.62px;font-weight:400;color:#8d9199;transform:scaleX(0.9434);">Ari Ramírez-Medina</div>
<div class="a" style="left:1924.4px;top:413px;width:103.2px;height:38.5px;border-radius:5px;background:#e8ebf7;"></div>
<div class="t" style="left:1935.70px;top:422.12px;font-size:23.48px;line-height:23.48px;font-weight:400;color:#1d1f25;transform:scaleX(0.9495);">Acetube</div>
<div class="t" style="left:2406.47px;top:423.81px;font-size:23.04px;line-height:23.04px;font-weight:400;color:#1d1f25;transform:scaleX(0.9450);">$15,133</div>
<div class="t" style="left:610.51px;top:480.81px;font-size:21.45px;line-height:21.45px;font-weight:400;color:#5f636b;transform:scaleX(0.9700);">4</div>
<div class="a" style="left:640.3px;top:469px;width:7.4px;height:41px;border-radius:3.7px;background:#166ee1;"></div>
<div class="t" style="left:724.34px;top:479.11px;font-size:23.77px;line-height:23.77px;font-weight:400;color:#1d1f25;transform:scaleX(0.8937);">LKS req</div>
<div class="a" style="left:1172px;top:469px;width:162.0px;height:39px;border-radius:19.5px;background:#166ee1;"></div>
<div class="t" style="left:1188.91px;top:477.90px;font-size:23.19px;line-height:23.19px;font-weight:400;color:#fff;transform:scaleX(1.0023);">Qualification</div>
<div class="a" style="left:1410.3px;top:469px;width:117.5px;height:39px;border-radius:19.5px;background:#ffd66e;"></div>
<div class="t" style="left:1426.54px;top:477.90px;font-size:23.19px;line-height:23.19px;font-weight:400;color:#1d1f25;transform:scaleX(1.0294);">Medium</div>
<div class="a" style="left:1613px;top:469px;width:164.4px;height:38.5px;box-sizing:border-box;border-radius:19.5px;background:#f1f3f6;border:1px solid #e3e6eb;"></div>
<div class="a" style="left:1613.5px;top:470px;width:36px;height:36.5px;border-radius:50%;background:#fff;"></div>
<svg class="a" style="left:1619px;top:476px;" width="24" height="24" viewBox="0 0 24 24" fill="none"><circle cx="12" cy="12.2" r="9.4" stroke="#8e9299" stroke-width="1.5"/><path d="M7.6 12.2 H16.4" stroke="#8e9299" stroke-width="1.5"/></svg>
<div class="t" style="left:1655.03px;top:478.10px;font-size:23.62px;line-height:23.62px;font-weight:400;color:#8d9199;transform:scaleX(0.8768);">Casey Park</div>
<div class="a" style="left:1924.4px;top:469px;width:257.4px;height:38.5px;border-radius:5px;background:#e8ebf7;"></div>
<div class="t" style="left:1933.95px;top:478.12px;font-size:23.48px;line-height:23.48px;font-weight:400;color:#1d1f25;transform:scaleX(0.9530);">Leonard Krower &amp; Sons</div>
<div class="t" style="left:2418.58px;top:479.81px;font-size:23.04px;line-height:23.04px;font-weight:400;color:#1d1f25;transform:scaleX(0.9450);">$9,767</div>
<div class="t" style="left:610.51px;top:536.81px;font-size:21.45px;line-height:21.45px;font-weight:400;color:#5f636b;transform:scaleX(0.9700);">5</div>
<div class="a" style="left:640.3px;top:525px;width:7.4px;height:41px;border-radius:3.7px;background:#39caff;"></div>
<div class="t" style="left:724.34px;top:535.11px;font-size:23.77px;line-height:23.77px;font-weight:400;color:#1d1f25;transform:scaleX(0.8946);">BPS second use case</div>
<div class="a" style="left:1172px;top:525px;width:122.0px;height:39px;border-radius:19.5px;background:#39caff;"></div>
<div class="t" style="left:1188.24px;top:533.90px;font-size:23.19px;line-height:23.19px;font-weight:400;color:#1d1f25;transform:scaleX(0.9696);">Proposal</div>
<div class="a" style="left:1410.3px;top:525px;width:119.4px;height:39px;border-radius:19.5px;background:#c4c7cd;"></div>
<div class="t" style="left:1428.40px;top:533.90px;font-size:23.19px;line-height:23.19px;font-weight:400;color:#1d1f25;transform:scaleX(0.9520);">Very low</div>
<div class="a" style="left:1613px;top:525px;width:190.2px;height:38.5px;box-sizing:border-box;border-radius:19.5px;background:#f1f3f6;border:1px solid #e3e6eb;"></div>
<div class="a" style="left:1613.5px;top:526px;width:36px;height:36.5px;border-radius:50%;background:#fff;"></div>
<svg class="a" style="left:1619px;top:532px;" width="24" height="24" viewBox="0 0 24 24" fill="none"><circle cx="12" cy="12.2" r="9.4" stroke="#8e9299" stroke-width="1.5"/><path d="M7.6 12.2 H16.4" stroke="#8e9299" stroke-width="1.5"/></svg>
<div class="t" style="left:1655.31px;top:534.10px;font-size:23.62px;line-height:23.62px;font-weight:400;color:#8d9199;transform:scaleX(0.9370);">Sandy Hagen</div>
<div class="a" style="left:1924.4px;top:525px;width:210.2px;height:38.5px;border-radius:5px;background:#e8ebf7;"></div>
<div class="t" style="left:1934.00px;top:534.12px;font-size:23.48px;line-height:23.48px;font-weight:400;color:#1d1f25;transform:scaleX(0.9287);">Bear Paw Solutions</div>
<div class="t" style="left:2406.47px;top:535.81px;font-size:23.04px;line-height:23.04px;font-weight:400;color:#1d1f25;transform:scaleX(0.9450);">$24,791</div>
<div class="t" style="left:610.35px;top:592.81px;font-size:21.45px;line-height:21.45px;font-weight:400;color:#5f636b;transform:scaleX(0.9700);">6</div>
<div class="a" style="left:640.3px;top:581px;width:7.4px;height:41px;border-radius:3.7px;background:#39caff;"></div>
<div class="t" style="left:725.31px;top:591.11px;font-size:23.77px;line-height:23.77px;font-weight:400;color:#1d1f25;transform:scaleX(0.9236);">SI expansion</div>
<div class="a" style="left:1172px;top:581px;width:122.0px;height:39px;border-radius:19.5px;background:#39caff;"></div>
<div class="t" style="left:1188.24px;top:589.90px;font-size:23.19px;line-height:23.19px;font-weight:400;color:#1d1f25;transform:scaleX(0.9696);">Proposal</div>
<div class="a" style="left:1410.3px;top:581px;width:74.5px;height:39px;border-radius:19.5px;background:#98e392;"></div>
<div class="t" style="left:1426.69px;top:589.90px;font-size:23.19px;line-height:23.19px;font-weight:400;color:#1d1f25;transform:scaleX(0.9461);">Low</div>
<div class="a" style="left:1613px;top:581px;width:164.4px;height:38.5px;box-sizing:border-box;border-radius:19.5px;background:#f1f3f6;border:1px solid #e3e6eb;"></div>
<div class="a" style="left:1613.5px;top:582px;width:36px;height:36.5px;border-radius:50%;background:#fff;"></div>
<svg class="a" style="left:1619px;top:588px;" width="24" height="24" viewBox="0 0 24 24" fill="none"><circle cx="12" cy="12.2" r="9.4" stroke="#8e9299" stroke-width="1.5"/><path d="M7.6 12.2 H16.4" stroke="#8e9299" stroke-width="1.5"/></svg>
<div class="t" style="left:1655.03px;top:590.10px;font-size:23.62px;line-height:23.62px;font-weight:400;color:#8d9199;transform:scaleX(0.8768);">Casey Park</div>
<div class="a" style="left:1924.4px;top:581px;width:225.2px;height:38.5px;border-radius:5px;background:#e8ebf7;"></div>
<div class="t" style="left:1934.99px;top:590.12px;font-size:23.48px;line-height:23.48px;font-weight:400;color:#1d1f25;transform:scaleX(0.9733);">Sunlight Intelligence</div>
<div class="t" style="left:2406.47px;top:591.81px;font-size:23.04px;line-height:23.04px;font-weight:400;color:#1d1f25;transform:scaleX(0.9450);">$12,687</div>
<div class="t" style="left:610.35px;top:648.81px;font-size:21.45px;line-height:21.45px;font-weight:400;color:#5f636b;transform:scaleX(0.9700);">7</div>
<div class="a" style="left:640.3px;top:637px;width:7.4px;height:41px;border-radius:3.7px;background:#39caff;"></div>
<div class="t" style="left:724.23px;top:647.11px;font-size:23.77px;line-height:23.77px;font-weight:400;color:#1d1f25;transform:scaleX(0.9514);">Robinetworks renewal</div>
<div class="a" style="left:1172px;top:637px;width:122.0px;height:39px;border-radius:19.5px;background:#39caff;"></div>
<div class="t" style="left:1188.24px;top:645.90px;font-size:23.19px;line-height:23.19px;font-weight:400;color:#1d1f25;transform:scaleX(0.9696);">Proposal</div>
<div class="a" style="left:1410.3px;top:637px;width:117.5px;height:39px;border-radius:19.5px;background:#ffd66e;"></div>
<div class="t" style="left:1426.54px;top:645.90px;font-size:23.19px;line-height:23.19px;font-weight:400;color:#1d1f25;transform:scaleX(1.0294);">Medium</div>
<div class="a" style="left:1613px;top:637px;width:190.2px;height:38.5px;box-sizing:border-box;border-radius:19.5px;background:#f1f3f6;border:1px solid #e3e6eb;"></div>
<div class="a" style="left:1613.5px;top:638px;width:36px;height:36.5px;border-radius:50%;background:#fff;"></div>
<svg class="a" style="left:1619px;top:644px;" width="24" height="24" viewBox="0 0 24 24" fill="none"><circle cx="12" cy="12.2" r="9.4" stroke="#8e9299" stroke-width="1.5"/><path d="M7.6 12.2 H16.4" stroke="#8e9299" stroke-width="1.5"/></svg>
<div class="t" style="left:1655.31px;top:646.10px;font-size:23.62px;line-height:23.62px;font-weight:400;color:#8d9199;transform:scaleX(0.9370);">Sandy Hagen</div>
<div class="a" style="left:1924.4px;top:637px;width:157.3px;height:38.5px;border-radius:5px;background:#e8ebf7;"></div>
<div class="t" style="left:1933.93px;top:646.12px;font-size:23.48px;line-height:23.48px;font-weight:400;color:#1d1f25;transform:scaleX(0.9666);">Robinetworks</div>
<div class="t" style="left:2406.47px;top:647.81px;font-size:23.04px;line-height:23.04px;font-weight:400;color:#1d1f25;transform:scaleX(0.9450);">$24,692</div>
<div class="t" style="left:610.51px;top:704.81px;font-size:21.45px;line-height:21.45px;font-weight:400;color:#5f636b;transform:scaleX(0.9700);">8</div>
<div class="a" style="left:640.3px;top:693px;width:7.4px;height:41px;border-radius:3.7px;background:#39caff;"></div>
<div class="t" style="left:724.26px;top:703.11px;font-size:23.77px;line-height:23.77px;font-weight:400;color:#1d1f25;transform:scaleX(0.9373);">Payless inbound</div>
<div class="a" style="left:1172px;top:693px;width:122.0px;height:39px;border-radius:19.5px;background:#39caff;"></div>
<div class="t" style="left:1188.24px;top:701.90px;font-size:23.19px;line-height:23.19px;font-weight:400;color:#1d1f25;transform:scaleX(0.9696);">Proposal</div>
<div class="a" style="left:1410.3px;top:693px;width:74.5px;height:39px;border-radius:19.5px;background:#98e392;"></div>
<div class="t" style="left:1426.69px;top:701.90px;font-size:23.19px;line-height:23.19px;font-weight:400;color:#1d1f25;transform:scaleX(0.9461);">Low</div>
<div class="a" style="left:1613px;top:693px;width:256.3px;height:38.5px;box-sizing:border-box;border-radius:19.5px;background:#f1f3f6;border:1px solid #e3e6eb;"></div>
<div class="a" style="left:1613.5px;top:694px;width:36px;height:36.5px;border-radius:50%;background:#fff;"></div>
<svg class="a" style="left:1619px;top:700px;" width="24" height="24" viewBox="0 0 24 24" fill="none"><circle cx="12" cy="12.2" r="9.4" stroke="#8e9299" stroke-width="1.5"/><path d="M7.6 12.2 H16.4" stroke="#8e9299" stroke-width="1.5"/></svg>
<div class="t" style="left:1656.00px;top:702.10px;font-size:23.62px;line-height:23.62px;font-weight:400;color:#8d9199;transform:scaleX(0.9434);">Ari Ramírez-Medina</div>
<div class="a" style="left:1924.4px;top:693px;width:195.3px;height:38.5px;border-radius:5px;background:#e8ebf7;"></div>
<div class="t" style="left:1934.07px;top:702.12px;font-size:23.48px;line-height:23.48px;font-weight:400;color:#1d1f25;transform:scaleX(0.8896);">Payless Cashways</div>
<div class="t" style="left:2406.47px;top:703.81px;font-size:23.04px;line-height:23.04px;font-weight:400;color:#1d1f25;transform:scaleX(0.9450);">$20,999</div>
<div class="t" style="left:610.35px;top:760.81px;font-size:21.45px;line-height:21.45px;font-weight:400;color:#5f636b;transform:scaleX(0.9700);">9</div>
<div class="a" style="left:640.3px;top:749px;width:7.4px;height:41px;border-radius:3.7px;background:#39caff;"></div>
<div class="t" style="left:724.35px;top:759.11px;font-size:23.77px;line-height:23.77px;font-weight:400;color:#1d1f25;transform:scaleX(0.8875);">EYS renewal</div>
<div class="a" style="left:1172px;top:749px;width:122.0px;height:39px;border-radius:19.5px;background:#39caff;"></div>
<div class="t" style="left:1188.24px;top:757.90px;font-size:23.19px;line-height:23.19px;font-weight:400;color:#1d1f25;transform:scaleX(0.9696);">Proposal</div>
<div class="a" style="left:1410.3px;top:749px;width:74.5px;height:39px;border-radius:19.5px;background:#98e392;"></div>
<div class="t" style="left:1426.69px;top:757.90px;font-size:23.19px;line-height:23.19px;font-weight:400;color:#1d1f25;transform:scaleX(0.9461);">Low</div>
<div class="a" style="left:1613px;top:749px;width:151.8px;height:38.5px;box-sizing:border-box;border-radius:19.5px;background:#f1f3f6;border:1px solid #e3e6eb;"></div>
<div class="a" style="left:1613.5px;top:750px;width:36px;height:36.5px;border-radius:50%;background:#fff;"></div>
<svg class="a" style="left:1619px;top:756px;" width="24" height="24" viewBox="0 0 24 24" fill="none"><circle cx="12" cy="12.2" r="9.4" stroke="#8e9299" stroke-width="1.5"/><path d="M7.6 12.2 H16.4" stroke="#8e9299" stroke-width="1.5"/></svg>
<div class="t" style="left:1655.68px;top:758.10px;font-size:23.62px;line-height:23.62px;font-weight:400;color:#8d9199;transform:scaleX(0.8762);">Jess Patel</div>
<div class="a" style="left:1924.4px;top:749px;width:197.5px;height:38.5px;border-radius:5px;background:#e8ebf7;"></div>
<div class="t" style="left:1934.02px;top:758.12px;font-size:23.48px;line-height:23.48px;font-weight:400;color:#1d1f25;transform:scaleX(0.9162);">Edge Yard Service</div>
<div class="t" style="left:2406.47px;top:759.81px;font-size:23.04px;line-height:23.04px;font-weight:400;color:#1d1f25;transform:scaleX(0.9450);">$23,503</div>
<div class="t" style="left:604.24px;top:816.81px;font-size:21.45px;line-height:21.45px;font-weight:400;color:#5f636b;transform:scaleX(0.9700);">10</div>
<div class="a" style="left:640.3px;top:805px;width:7.4px;height:41px;border-radius:3.7px;background:#39caff;"></div>
<div class="t" style="left:724.97px;top:815.11px;font-size:23.77px;line-height:23.77px;font-weight:400;color:#1d1f25;transform:scaleX(0.9282);">Galerprises renewal</div>
<div class="a" style="left:1172px;top:805px;width:122.0px;height:39px;border-radius:19.5px;background:#39caff;"></div>
<div class="t" style="left:1188.24px;top:813.90px;font-size:23.19px;line-height:23.19px;font-weight:400;color:#1d1f25;transform:scaleX(0.9696);">Proposal</div>
<div class="a" style="left:1410.3px;top:805px;width:74.5px;height:39px;border-radius:19.5px;background:#98e392;"></div>
<div class="t" style="left:1426.69px;top:813.90px;font-size:23.19px;line-height:23.19px;font-weight:400;color:#1d1f25;transform:scaleX(0.9461);">Low</div>
<div class="a" style="left:1613px;top:805px;width:151.8px;height:38.5px;box-sizing:border-box;border-radius:19.5px;background:#f1f3f6;border:1px solid #e3e6eb;"></div>
<div class="a" style="left:1613.5px;top:806px;width:36px;height:36.5px;border-radius:50%;background:#fff;"></div>
<svg class="a" style="left:1619px;top:812px;" width="24" height="24" viewBox="0 0 24 24" fill="none"><circle cx="12" cy="12.2" r="9.4" stroke="#8e9299" stroke-width="1.5"/><path d="M7.6 12.2 H16.4" stroke="#8e9299" stroke-width="1.5"/></svg>
<div class="t" style="left:1655.68px;top:814.10px;font-size:23.62px;line-height:23.62px;font-weight:400;color:#8d9199;transform:scaleX(0.8762);">Jess Patel</div>
<div class="a" style="left:1924.4px;top:805px;width:131.3px;height:38.5px;border-radius:5px;background:#e8ebf7;"></div>
<div class="t" style="left:1934.69px;top:814.12px;font-size:23.48px;line-height:23.48px;font-weight:400;color:#1d1f25;transform:scaleX(0.9221);">Galerprises</div>
<div class="t" style="left:2406.47px;top:815.81px;font-size:23.04px;line-height:23.04px;font-weight:400;color:#1d1f25;transform:scaleX(0.9450);">$23,205</div>
<div class="t" style="left:605.17px;top:872.81px;font-size:21.45px;line-height:21.45px;font-weight:400;color:#5f636b;transform:scaleX(0.9700);">11</div>
<div class="a" style="left:640.3px;top:861px;width:7.4px;height:41px;border-radius:3.7px;background:#39caff;"></div>
<div class="t" style="left:724.38px;top:871.11px;font-size:23.77px;line-height:23.77px;font-weight:400;color:#1d1f25;transform:scaleX(0.8737);">Payless Cashways EU</div>
<div class="a" style="left:1172px;top:861px;width:122.0px;height:39px;border-radius:19.5px;background:#39caff;"></div>
<div class="t" style="left:1188.24px;top:869.90px;font-size:23.19px;line-height:23.19px;font-weight:400;color:#1d1f25;transform:scaleX(0.9696);">Proposal</div>
<div class="a" style="left:1410.3px;top:861px;width:82.6px;height:39px;border-radius:19.5px;background:#ffab85;"></div>
<div class="t" style="left:1426.49px;top:869.90px;font-size:23.19px;line-height:23.19px;font-weight:400;color:#1d1f25;transform:scaleX(1.0521);">High</div>
<div class="a" style="left:1613px;top:861px;width:151.8px;height:38.5px;box-sizing:border-box;border-radius:19.5px;background:#f1f3f6;border:1px solid #e3e6eb;"></div>
<div class="a" style="left:1613.5px;top:862px;width:36px;height:36.5px;border-radius:50%;background:#fff;"></div>
<svg class="a" style="left:1619px;top:868px;" width="24" height="24" viewBox="0 0 24 24" fill="none"><circle cx="12" cy="12.2" r="9.4" stroke="#8e9299" stroke-width="1.5"/><path d="M7.6 12.2 H16.4" stroke="#8e9299" stroke-width="1.5"/></svg>
<div class="t" style="left:1655.68px;top:870.10px;font-size:23.62px;line-height:23.62px;font-weight:400;color:#8d9199;transform:scaleX(0.8762);">Jess Patel</div>
<div class="a" style="left:1924.4px;top:861px;width:195.3px;height:38.5px;border-radius:5px;background:#e8ebf7;"></div>
<div class="t" style="left:1934.07px;top:870.12px;font-size:23.48px;line-height:23.48px;font-weight:400;color:#1d1f25;transform:scaleX(0.8896);">Payless Cashways</div>
<div class="t" style="left:2406.47px;top:871.81px;font-size:23.04px;line-height:23.04px;font-weight:400;color:#1d1f25;transform:scaleX(0.9450);">$15,953</div>
<div class="t" style="left:604.40px;top:928.81px;font-size:21.45px;line-height:21.45px;font-weight:400;color:#5f636b;transform:scaleX(0.9700);">12</div>
<div class="a" style="left:640.3px;top:917px;width:7.4px;height:41px;border-radius:3.7px;background:#fcb400;"></div>
<div class="t" style="left:724.28px;top:927.11px;font-size:23.77px;line-height:23.77px;font-weight:400;color:#1d1f25;transform:scaleX(0.9281);">EFC inbound</div>
<div class="a" style="left:1172px;top:917px;width:138.0px;height:39px;border-radius:19.5px;background:#fcb400;"></div>
<div class="t" style="left:1188.25px;top:925.90px;font-size:23.19px;line-height:23.19px;font-weight:400;color:#1d1f25;transform:scaleX(0.9651);">Evaluation</div>
<div class="a" style="left:1410.3px;top:917px;width:117.5px;height:39px;border-radius:19.5px;background:#ffd66e;"></div>
<div class="t" style="left:1426.54px;top:925.90px;font-size:23.19px;line-height:23.19px;font-weight:400;color:#1d1f25;transform:scaleX(1.0294);">Medium</div>
<div class="a" style="left:1613px;top:917px;width:164.4px;height:38.5px;box-sizing:border-box;border-radius:19.5px;background:#f1f3f6;border:1px solid #e3e6eb;"></div>
<div class="a" style="left:1613.5px;top:918px;width:36px;height:36.5px;border-radius:50%;background:#fff;"></div>
<svg class="a" style="left:1619px;top:924px;" width="24" height="24" viewBox="0 0 24 24" fill="none"><circle cx="12" cy="12.2" r="9.4" stroke="#8e9299" stroke-width="1.5"/><path d="M7.6 12.2 H16.4" stroke="#8e9299" stroke-width="1.5"/></svg>
<div class="t" style="left:1655.03px;top:926.10px;font-size:23.62px;line-height:23.62px;font-weight:400;color:#8d9199;transform:scaleX(0.8768);">Casey Park</div>
<div class="a" style="left:1924.4px;top:917px;width:214.2px;height:38.5px;border-radius:5px;background:#e8ebf7;"></div>
<div class="t" style="left:1933.99px;top:926.12px;font-size:23.48px;line-height:23.48px;font-weight:400;color:#1d1f25;transform:scaleX(0.9304);">Eagle Food Centers</div>
<div class="t" style="left:2406.13px;top:927.81px;font-size:23.04px;line-height:23.04px;font-weight:400;color:#1d1f25;transform:scaleX(0.9450);">$18,714</div>
<div class="t" style="left:604.40px;top:984.81px;font-size:21.45px;line-height:21.45px;font-weight:400;color:#5f636b;transform:scaleX(0.9700);">13</div>
<div class="a" style="left:640.3px;top:973px;width:7.4px;height:41px;border-radius:3.7px;background:#fcb400;"></div>
<div class="t" style="left:724.21px;top:983.11px;font-size:23.77px;line-height:23.77px;font-weight:400;color:#1d1f25;transform:scaleX(0.9664);">Huyler main team</div>
<div class="a" style="left:1172px;top:973px;width:138.0px;height:39px;border-radius:19.5px;background:#fcb400;"></div>
<div class="t" style="left:1188.25px;top:981.90px;font-size:23.19px;line-height:23.19px;font-weight:400;color:#1d1f25;transform:scaleX(0.9651);">Evaluation</div>
<div class="a" style="left:1410.3px;top:973px;width:128.4px;height:39px;border-radius:19.5px;background:#ffa6c2;"></div>
<div class="t" style="left:1428.40px;top:981.90px;font-size:23.19px;line-height:23.19px;font-weight:400;color:#1d1f25;transform:scaleX(0.9719);">Very high</div>
<div class="a" style="left:1613px;top:973px;width:164.4px;height:38.5px;box-sizing:border-box;border-radius:19.5px;background:#f1f3f6;border:1px solid #e3e6eb;"></div>
<div class="a" style="left:1613.5px;top:974px;width:36px;height:36.5px;border-radius:50%;background:#fff;"></div>
<svg class="a" style="left:1619px;top:980px;" width="24" height="24" viewBox="0 0 24 24" fill="none"><circle cx="12" cy="12.2" r="9.4" stroke="#8e9299" stroke-width="1.5"/><path d="M7.6 12.2 H16.4" stroke="#8e9299" stroke-width="1.5"/></svg>
<div class="t" style="left:1655.03px;top:982.10px;font-size:23.62px;line-height:23.62px;font-weight:400;color:#8d9199;transform:scaleX(0.8768);">Casey Park</div>
<div class="a" style="left:1924.4px;top:973px;width:101.1px;height:38.5px;border-radius:5px;background:#e8ebf7;"></div>
<div class="t" style="left:1933.93px;top:982.12px;font-size:23.48px;line-height:23.48px;font-weight:400;color:#1d1f25;transform:scaleX(0.9669);">Huyler's</div>
<div class="t" style="left:2406.47px;top:983.81px;font-size:23.04px;line-height:23.04px;font-weight:400;color:#1d1f25;transform:scaleX(0.9450);">$20,539</div>
<div class="t" style="left:604.24px;top:1040.81px;font-size:21.45px;line-height:21.45px;font-weight:400;color:#5f636b;transform:scaleX(0.9700);">14</div>
<div class="a" style="left:640.3px;top:1029px;width:7.4px;height:41px;border-radius:3.7px;background:#fcb400;"></div>
<div class="t" style="left:725.71px;top:1039.11px;font-size:23.77px;line-height:23.77px;font-weight:400;color:#1d1f25;transform:scaleX(0.7681);">JJ RFI</div>
<div class="a" style="left:1172px;top:1029px;width:138.0px;height:39px;border-radius:19.5px;background:#fcb400;"></div>
<div class="t" style="left:1188.25px;top:1037.90px;font-size:23.19px;line-height:23.19px;font-weight:400;color:#1d1f25;transform:scaleX(0.9651);">Evaluation</div>
<div class="a" style="left:1410.3px;top:1029px;width:82.6px;height:39px;border-radius:19.5px;background:#ffab85;"></div>
<div class="t" style="left:1426.49px;top:1037.90px;font-size:23.19px;line-height:23.19px;font-weight:400;color:#1d1f25;transform:scaleX(1.0521);">High</div>
<div class="a" style="left:1613px;top:1029px;width:240.0px;height:38.5px;box-sizing:border-box;border-radius:19.5px;background:#f1f3f6;border:1px solid #e3e6eb;"></div>
<div class="a" style="left:1613.5px;top:1030px;width:36px;height:36.5px;border-radius:50%;background:#fff;"></div>
<svg class="a" style="left:1619px;top:1036px;" width="24" height="24" viewBox="0 0 24 24" fill="none"><circle cx="12" cy="12.2" r="9.4" stroke="#8e9299" stroke-width="1.5"/><path d="M7.6 12.2 H16.4" stroke="#8e9299" stroke-width="1.5"/></svg>
<div class="t" style="left:1654.22px;top:1038.10px;font-size:23.62px;line-height:23.62px;font-weight:400;color:#8d9199;transform:scaleX(0.9647);">Logan Grandmont</div>
<div class="a" style="left:1924.4px;top:1029px;width:124.4px;height:38.5px;border-radius:5px;background:#e8ebf7;"></div>
<div class="t" style="left:1935.38px;top:1038.12px;font-size:23.48px;line-height:23.48px;font-weight:400;color:#1d1f25;transform:scaleX(0.8775);">Jay Jacobs</div>
<div class="t" style="left:2418.24px;top:1039.81px;font-size:23.04px;line-height:23.04px;font-weight:400;color:#1d1f25;transform:scaleX(0.9450);">$7,180</div>
<div class="t" style="left:604.40px;top:1096.81px;font-size:21.45px;line-height:21.45px;font-weight:400;color:#5f636b;transform:scaleX(0.9700);">15</div>
<div class="a" style="left:640.3px;top:1085px;width:7.4px;height:41px;border-radius:3.7px;background:#fcb400;"></div>
<div class="t" style="left:726.00px;top:1095.11px;font-size:23.77px;line-height:23.77px;font-weight:400;color:#1d1f25;transform:scaleX(0.9082);">Wolf RFI</div>
<div class="a" style="left:1172px;top:1085px;width:138.0px;height:39px;border-radius:19.5px;background:#fcb400;"></div>
<div class="t" style="left:1188.25px;top:1093.90px;font-size:23.19px;line-height:23.19px;font-weight:400;color:#1d1f25;transform:scaleX(0.9651);">Evaluation</div>
<div class="a" style="left:1410.3px;top:1085px;width:82.6px;height:39px;border-radius:19.5px;background:#ffab85;"></div>
<div class="t" style="left:1426.49px;top:1093.90px;font-size:23.19px;line-height:23.19px;font-weight:400;color:#1d1f25;transform:scaleX(1.0521);">High</div>
<div class="a" style="left:1613px;top:1085px;width:164.4px;height:38.5px;box-sizing:border-box;border-radius:19.5px;background:#f1f3f6;border:1px solid #e3e6eb;"></div>
<div class="a" style="left:1613.5px;top:1086px;width:36px;height:36.5px;border-radius:50%;background:#fff;"></div>
<svg class="a" style="left:1619px;top:1092px;" width="24" height="24" viewBox="0 0 24 24" fill="none"><circle cx="12" cy="12.2" r="9.4" stroke="#8e9299" stroke-width="1.5"/><path d="M7.6 12.2 H16.4" stroke="#8e9299" stroke-width="1.5"/></svg>
<div class="t" style="left:1655.03px;top:1094.10px;font-size:23.62px;line-height:23.62px;font-weight:400;color:#8d9199;transform:scaleX(0.8768);">Casey Park</div>
<div class="a" style="left:1924.4px;top:1085px;width:145.1px;height:38.5px;border-radius:5px;background:#e8ebf7;"></div>
<div class="t" style="left:1935.70px;top:1094.12px;font-size:23.48px;line-height:23.48px;font-weight:400;color:#1d1f25;transform:scaleX(0.9897);">Wolf Motors</div>
<div class="t" style="left:2406.47px;top:1095.81px;font-size:23.04px;line-height:23.04px;font-weight:400;color:#1d1f25;transform:scaleX(0.9450);">$17,252</div>
<div class="t" style="left:604.40px;top:1152.81px;font-size:21.45px;line-height:21.45px;font-weight:400;color:#5f636b;transform:scaleX(0.9700);">16</div>
<div class="a" style="left:640.3px;top:1141px;width:7.4px;height:41px;border-radius:3.7px;background:#fcb400;"></div>
<div class="t" style="left:726.00px;top:1151.11px;font-size:23.77px;line-height:23.77px;font-weight:400;color:#1d1f25;transform:scaleX(0.9592);">Acepoly first team</div>
<div class="a" style="left:1172px;top:1141px;width:138.0px;height:39px;border-radius:19.5px;background:#fcb400;"></div>
<div class="t" style="left:1188.25px;top:1149.90px;font-size:23.19px;line-height:23.19px;font-weight:400;color:#1d1f25;transform:scaleX(0.9651);">Evaluation</div>
<div class="a" style="left:1410.3px;top:1141px;width:82.6px;height:39px;border-radius:19.5px;background:#ffab85;"></div>
<div class="t" style="left:1426.49px;top:1149.90px;font-size:23.19px;line-height:23.19px;font-weight:400;color:#1d1f25;transform:scaleX(1.0521);">High</div>
<div class="a" style="left:1613px;top:1141px;width:256.3px;height:38.5px;box-sizing:border-box;border-radius:19.5px;background:#f1f3f6;border:1px solid #e3e6eb;"></div>
<div class="a" style="left:1613.5px;top:1142px;width:36px;height:36.5px;border-radius:50%;background:#fff;"></div>
<svg class="a" style="left:1619px;top:1148px;" width="24" height="24" viewBox="0 0 24 24" fill="none"><circle cx="12" cy="12.2" r="9.4" stroke="#8e9299" stroke-width="1.5"/><path d="M7.6 12.2 H16.4" stroke="#8e9299" stroke-width="1.5"/></svg>
<div class="t" style="left:1656.00px;top:1150.10px;font-size:23.62px;line-height:23.62px;font-weight:400;color:#8d9199;transform:scaleX(0.9434);">Ari Ramírez-Medina</div>
<div class="a" style="left:1924.4px;top:1141px;width:101.1px;height:38.5px;border-radius:5px;background:#e8ebf7;"></div>
<div class="t" style="left:1935.70px;top:1150.12px;font-size:23.48px;line-height:23.48px;font-weight:400;color:#1d1f25;transform:scaleX(0.9434);">Acepoly</div>
<div class="t" style="left:2418.58px;top:1151.81px;font-size:23.04px;line-height:23.04px;font-weight:400;color:#1d1f25;transform:scaleX(0.9450);">$6,615</div>
<div class="t" style="left:604.40px;top:1208.81px;font-size:21.45px;line-height:21.45px;font-weight:400;color:#5f636b;transform:scaleX(0.9700);">17</div>
<div class="a" style="left:640.3px;top:1197px;width:7.4px;height:41px;border-radius:3.7px;background:#7c39ed;"></div>
<div class="t" style="left:724.95px;top:1207.11px;font-size:23.77px;line-height:23.77px;font-weight:400;color:#1d1f25;transform:scaleX(0.9412);">Galerprises exploratory</div>
<div class="a" style="left:1172px;top:1197px;width:154.8px;height:39px;border-radius:19.5px;background:#7c39ed;"></div>
<div class="t" style="left:1188.12px;top:1205.90px;font-size:23.19px;line-height:23.19px;font-weight:400;color:#fff;transform:scaleX(1.0359);">Negotiation</div>
<div class="a" style="left:1410.3px;top:1197px;width:119.4px;height:39px;border-radius:19.5px;background:#c4c7cd;"></div>
<div class="t" style="left:1428.40px;top:1205.90px;font-size:23.19px;line-height:23.19px;font-weight:400;color:#1d1f25;transform:scaleX(0.9520);">Very low</div>
<div class="a" style="left:1613px;top:1197px;width:151.8px;height:38.5px;box-sizing:border-box;border-radius:19.5px;background:#f1f3f6;border:1px solid #e3e6eb;"></div>
<div class="a" style="left:1613.5px;top:1198px;width:36px;height:36.5px;border-radius:50%;background:#fff;"></div>
<svg class="a" style="left:1619px;top:1204px;" width="24" height="24" viewBox="0 0 24 24" fill="none"><circle cx="12" cy="12.2" r="9.4" stroke="#8e9299" stroke-width="1.5"/><path d="M7.6 12.2 H16.4" stroke="#8e9299" stroke-width="1.5"/></svg>
<div class="t" style="left:1655.68px;top:1206.10px;font-size:23.62px;line-height:23.62px;font-weight:400;color:#8d9199;transform:scaleX(0.8762);">Jess Patel</div>
<div class="a" style="left:1924.4px;top:1197px;width:131.3px;height:38.5px;border-radius:5px;background:#e8ebf7;"></div>
<div class="t" style="left:1934.69px;top:1206.12px;font-size:23.48px;line-height:23.48px;font-weight:400;color:#1d1f25;transform:scaleX(0.9221);">Galerprises</div>
<div class="t" style="left:2406.47px;top:1207.81px;font-size:23.04px;line-height:23.04px;font-weight:400;color:#1d1f25;transform:scaleX(0.9450);">$10,501</div>
<div class="t" style="left:604.40px;top:1264.81px;font-size:21.45px;line-height:21.45px;font-weight:400;color:#5f636b;transform:scaleX(0.9700);">18</div>
<div class="a" style="left:640.3px;top:1253px;width:7.4px;height:41px;border-radius:3.7px;background:#7c39ed;"></div>
<div class="t" style="left:726.00px;top:1263.11px;font-size:23.77px;line-height:23.77px;font-weight:400;color:#1d1f25;transform:scaleX(0.9163);">Acepoly AUS</div>
<div class="a" style="left:1172px;top:1253px;width:154.8px;height:39px;border-radius:19.5px;background:#7c39ed;"></div>
<div class="t" style="left:1188.12px;top:1261.90px;font-size:23.19px;line-height:23.19px;font-weight:400;color:#fff;transform:scaleX(1.0359);">Negotiation</div>
<div class="a" style="left:1410.3px;top:1253px;width:128.4px;height:39px;border-radius:19.5px;background:#ffa6c2;"></div>
<div class="t" style="left:1428.40px;top:1261.90px;font-size:23.19px;line-height:23.19px;font-weight:400;color:#1d1f25;transform:scaleX(0.9719);">Very high</div>
<div class="a" style="left:1613px;top:1253px;width:240.0px;height:38.5px;box-sizing:border-box;border-radius:19.5px;background:#f1f3f6;border:1px solid #e3e6eb;"></div>
<div class="a" style="left:1613.5px;top:1254px;width:36px;height:36.5px;border-radius:50%;background:#fff;"></div>
<svg class="a" style="left:1619px;top:1260px;" width="24" height="24" viewBox="0 0 24 24" fill="none"><circle cx="12" cy="12.2" r="9.4" stroke="#8e9299" stroke-width="1.5"/><path d="M7.6 12.2 H16.4" stroke="#8e9299" stroke-width="1.5"/></svg>
<div class="t" style="left:1654.22px;top:1262.10px;font-size:23.62px;line-height:23.62px;font-weight:400;color:#8d9199;transform:scaleX(0.9647);">Logan Grandmont</div>
<div class="a" style="left:1924.4px;top:1253px;width:101.1px;height:38.5px;border-radius:5px;background:#e8ebf7;"></div>
<div class="t" style="left:1935.70px;top:1262.12px;font-size:23.48px;line-height:23.48px;font-weight:400;color:#1d1f25;transform:scaleX(0.9434);">Acepoly</div>
<div class="t" style="left:2406.13px;top:1263.81px;font-size:23.04px;line-height:23.04px;font-weight:400;color:#1d1f25;transform:scaleX(0.9450);">$22,024</div>
<div class="t" style="left:604.40px;top:1320.81px;font-size:21.45px;line-height:21.45px;font-weight:400;color:#5f636b;transform:scaleX(0.9700);">19</div>
<div class="a" style="left:640.3px;top:1309px;width:7.4px;height:41px;border-radius:3.7px;background:#7c39ed;"></div>
<div class="t" style="left:724.22px;top:1319.11px;font-size:23.77px;line-height:23.77px;font-weight:400;color:#1d1f25;transform:scaleX(0.9600);">ET pilot</div>
<div class="a" style="left:1172px;top:1309px;width:154.8px;height:39px;border-radius:19.5px;background:#7c39ed;"></div>
<div class="t" style="left:1188.12px;top:1317.90px;font-size:23.19px;line-height:23.19px;font-weight:400;color:#fff;transform:scaleX(1.0359);">Negotiation</div>
<div class="a" style="left:1410.3px;top:1309px;width:119.4px;height:39px;border-radius:19.5px;background:#c4c7cd;"></div>
<div class="t" style="left:1428.40px;top:1317.90px;font-size:23.19px;line-height:23.19px;font-weight:400;color:#1d1f25;transform:scaleX(0.9520);">Very low</div>
<div class="a" style="left:1613px;top:1309px;width:190.2px;height:38.5px;box-sizing:border-box;border-radius:19.5px;background:#f1f3f6;border:1px solid #e3e6eb;"></div>
<div class="a" style="left:1613.5px;top:1310px;width:36px;height:36.5px;border-radius:50%;background:#fff;"></div>
<svg class="a" style="left:1619px;top:1316px;" width="24" height="24" viewBox="0 0 24 24" fill="none"><circle cx="12" cy="12.2" r="9.4" stroke="#8e9299" stroke-width="1.5"/><path d="M7.6 12.2 H16.4" stroke="#8e9299" stroke-width="1.5"/></svg>
<div class="t" style="left:1655.31px;top:1318.10px;font-size:23.62px;line-height:23.62px;font-weight:400;color:#8d9199;transform:scaleX(0.9370);">Sandy Hagen</div>
<div class="a" style="left:1924.4px;top:1309px;width:102.0px;height:38.5px;border-radius:5px;background:#e8ebf7;"></div>
<div class="t" style="left:1934.05px;top:1318.12px;font-size:23.48px;line-height:23.48px;font-weight:400;color:#1d1f25;transform:scaleX(0.9000);">Elek-Tek</div>
<div class="t" style="left:2406.47px;top:1319.81px;font-size:23.04px;line-height:23.04px;font-weight:400;color:#1d1f25;transform:scaleX(0.9450);">$16,616</div>
<div class="a" style="left:2484px;top:300px;width:14px;height:620px;border-radius:7px;background:#c6c6c6;box-shadow:0 0 0 1px rgba(255,255,255,.8);"></div>
<div class="a" style="left:588px;top:1354px;width:1914px;height:58px;background:#f8f9fb;"></div>
<div class="a" style="left:588px;top:1354px;width:1914px;height:1px;background:#dfe1e5;"></div>
<div class="a" style="left:1160px;top:1354px;width:1px;height:58px;background:#cfd2d6;"></div>
<div class="t" style="left:844.91px;top:1367.91px;font-size:18.41px;line-height:18.41px;font-weight:400;color:#2b2e35;transform:scaleX(1.0336);">28 records</div>
<div class="t" style="left:2349.14px;top:1367.21px;font-size:19.57px;line-height:19.57px;font-weight:400;color:#5f6671;transform:scaleX(0.9222);">Sum</div>
<div class="t" style="left:2394.60px;top:1365.71px;font-size:23.48px;line-height:23.48px;font-weight:400;color:#5f6671;transform:scaleX(0.8930);">$478,691</div>
<div class="a" style="left:594px;top:1393.5px;width:918px;height:14.5px;border-radius:7.5px;background:#c8c9cc;"></div>
<div class="a" style="left:602px;top:1327.5px;width:228.5px;height:60px;box-sizing:border-box;border-radius:30px;border:1px solid #dedede;background:#fff;box-shadow:0 1px 3px rgba(0,0,0,.06);"></div>
<div class="a" style="left:680px;top:1328px;width:1px;height:59px;background:#e3e3e3;"></div>
<svg class="a" style="left:630px;top:1342px;" width="30" height="30" viewBox="0 0 30 30" fill="none"><path d="M15 4.6 V25.6 M4.6 15.1 H25.4" stroke="#1d1f25" stroke-width="1.9"/></svg>
<svg class="a" style="left:700px;top:1340px;" width="35" height="35" viewBox="0 0 35 35" fill="none"><path d="M5.7 23.8 L22.9 6.7 L26.2 9.9 L9.2 27 Z" stroke="#1d1f25" stroke-width="1.6" stroke-linejoin="round"/>
<path d="M17.8 11.7 L21.1 14.9" stroke="#1d1f25" stroke-width="1.5"/>
<path d="M11.2 6.6 V12.2 M8.4 9.4 H14 M25.5 16.2 V22.8 M22.2 19.5 H28.8 M20.3 22.3 V27.1 M17.9 24.7 H22.7" stroke="#1d1f25" stroke-width="1.6" stroke-linecap="round"/></svg>
<div class="t" style="left:744.60px;top:1347.21px;font-size:23.91px;line-height:23.91px;font-weight:400;color:#1d1f25;transform:scaleX(0.9350);">Add...</div>
</body></html>
